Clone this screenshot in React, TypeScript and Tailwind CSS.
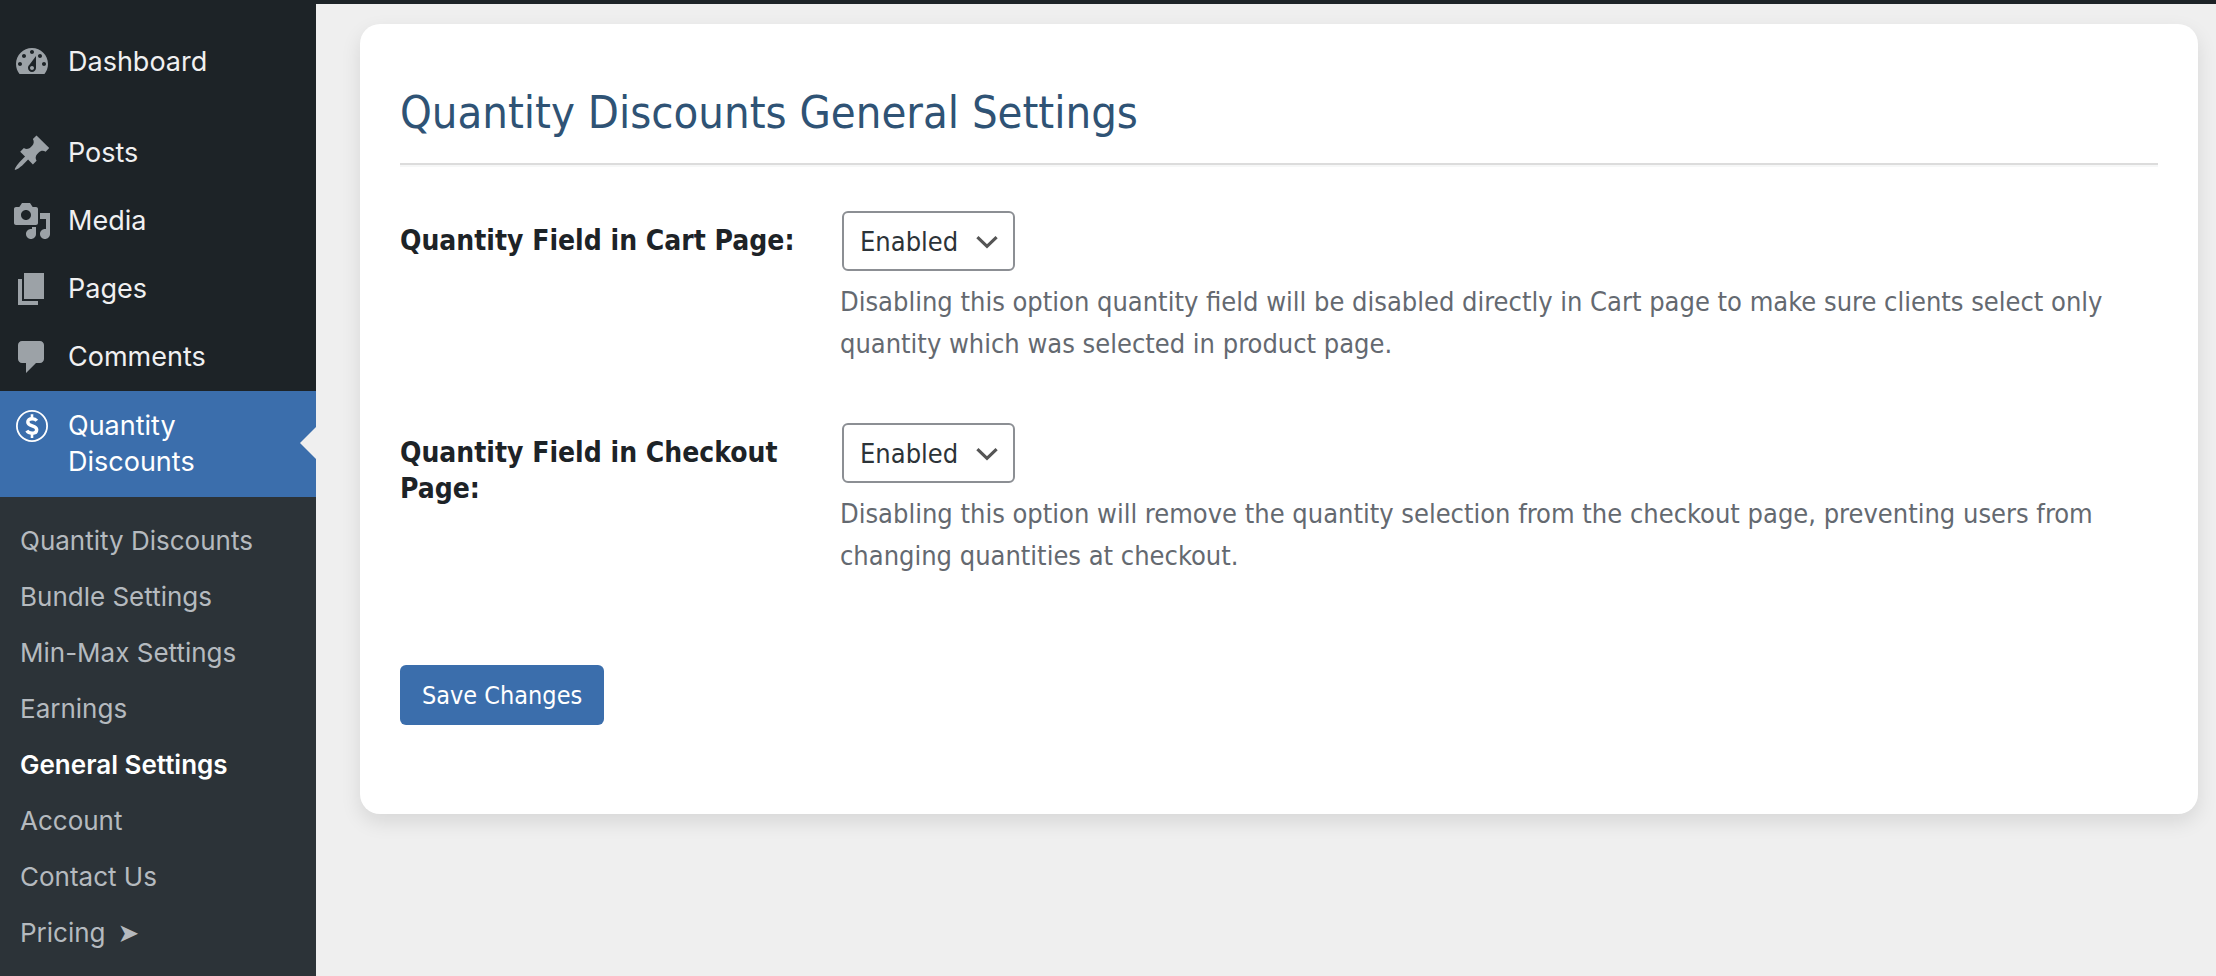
import type { ReactNode } from "react";

const menu = [
  {
    label: "Posts",
    path: "M10.44 3.02l1.82-1.82 6.36 6.35-1.83 1.82c-1.05-.68-2.48-.57-3.41.36l-.75.75c-.92.93-1.04 2.35-.35 3.41l-1.83 1.82-2.41-2.41-2.8 2.79c-.42.42-3.38 2.71-3.8 2.29s1.86-3.39 2.28-3.81l2.79-2.79L4.1 9.36l1.83-1.82c1.05.69 2.48.57 3.4-.36l.75-.75c.93-.92 1.05-2.35.36-3.41z",
  },
  {
    label: "Media",
    path: "M13 11V4c0-.55-.45-1-1-1h-1.67L9 1H5L3.67 3H2c-.55 0-1 .45-1 1v7c0 .55.45 1 1 1h10c.55 0 1-.45 1-1zM7 4.5c1.38 0 2.5 1.12 2.5 2.5S8.38 9.5 7 9.5 4.5 8.38 4.5 7 5.62 4.5 7 4.5zM14 6h5v10.5c0 1.38-1.12 2.5-2.5 2.5S14 17.88 14 16.5s1.12-2.5 2.5-2.5c.17 0 .34.02.5.05V9h-3V6zm-4 8.05V13h2v3.5c0 1.38-1.12 2.5-2.5 2.5S7 17.88 7 16.5 8.12 14 9.5 14c.17 0 .34.02.5.05z",
  },
  { label: "Pages", path: "M6 15V2h10v13H6zm-1 1h8v2H3V5h2v11z" },
  {
    label: "Comments",
    path: "M5 2h9c1.1 0 2 .9 2 2v7c0 1.1-.9 2-2 2h-2l-5 5v-5H5c-1.1 0-2-.9-2-2V4c0-1.1.9-2 2-2z",
  },
];

const dashboardPath =
  "M3.76 16h12.48c1.1-1.37 1.76-3.11 1.76-5 0-4.42-3.58-8-8-8s-8 3.58-8 8c0 1.89.66 3.63 1.76 5zM10 4c.55 0 1 .45 1 1s-.45 1-1 1-1-.45-1-1 .45-1 1-1zM6 6c.55 0 1 .45 1 1s-.45 1-1 1-1-.45-1-1 .45-1 1-1zm8 0c.55 0 1 .45 1 1s-.45 1-1 1-1-.45-1-1 .45-1 1-1zm-5.37 5.55L12 7v6c0 1.1-.9 2-2 2s-2-.9-2-2c0-.57.24-1.08.63-1.45zM4 10c.55 0 1 .45 1 1s-.45 1-1 1-1-.45-1-1 .45-1 1-1zm12 0c.55 0 1 .45 1 1s-.45 1-1 1-1-.45-1-1 .45-1 1-1zm-5 3c0-.55-.45-1-1-1s-1 .45-1 1 .45 1 1 1 1-.45 1-1z";

const submenu = [
  "Quantity Discounts",
  "Bundle Settings",
  "Min-Max Settings",
  "Earnings",
  "General Settings",
  "Account",
  "Contact Us",
];

function MenuItem({ label, path }: { label: string; path: string }) {
  return (
    <li>
      <a href="#" className="flex items-start gap-4 py-4 pl-3 text-[#f0f0f1]">
        <svg viewBox="0 0 20 20" className="-my-0.5 size-10 shrink-0 fill-[#9ca2a7]" aria-hidden="true">
          <path fillRule="evenodd" d={path} />
        </svg>
        {label}
      </a>
    </li>
  );
}

function SettingRow({ id, label, children }: { id: string; label: string; children: ReactNode }) {
  return (
    <div className="grid grid-cols-[400px_minmax(0,1fr)] gap-x-10">
      <label htmlFor={id} className="pt-3 text-[28px] leading-9 font-bold text-[#1d2327]">
        {label}
      </label>
      <div>
        <div className="relative ml-0.5 w-fit">
          <select
            id={id}
            defaultValue="Enabled"
            className="block h-[60px] w-[173px] appearance-none rounded-md border-2 border-[#8c8f94] bg-white pt-0.5 pl-4 text-[27px] leading-9 text-[#2c3338]"
          >
            <option>Enabled</option>
            <option>Disabled</option>
          </select>
          <svg
            viewBox="0 0 32 32"
            className="pointer-events-none absolute top-3.5 right-3 size-8"
            fill="none"
            stroke="#555555"
            strokeWidth="3.2"
            aria-hidden="true"
          >
            <path d="M6.400 12.200l9.600 9.200 9.600-9.200" />
          </svg>
        </div>
        <p className="mt-2.5 text-[27px] leading-[42px] text-[#646970]">{children}</p>
      </div>
    </div>
  );
}

export default function App() {
  return (
    <div className="flex min-h-screen flex-col border-t-4 border-[#1d2327] bg-[#efefef]">
      <div className="flex flex-1">
        <nav
          aria-label="Main menu"
          className="flex w-[316px] shrink-0 flex-col bg-[#1d2327] pt-6 font-['Inter',sans-serif] text-[27px] leading-9"
        >
          <ul>
            <MenuItem label="Dashboard" path={dashboardPath} />
            <li className="h-[23px]" aria-hidden="true" />
            {menu.map((m) => (
              <MenuItem key={m.label} label={m.label} path={m.path} />
            ))}
            <li>
              <a href="#" className="relative flex items-start gap-4 bg-[#3b6eac] pt-[17px] pb-[17px] pl-3 text-white">
                <svg
                  viewBox="0 0 40 40"
                  className="-my-0.5 size-10 shrink-0"
                  fill="none"
                  stroke="currentColor"
                  aria-hidden="true"
                >
                  <circle cx="20" cy="20" r="15.1" strokeWidth="1.8" />
                  <path
                    d="M24.800 14.700c-1-1.300-2.600-2-4.700-2-2.600 0-4.300 1.300-4.300 3.300 0 4.800 8.900 2.900 8.900 7.700 0 2.200-1.900 3.500-4.600 3.500-2.300 0-4.300-.9-5.300-2.500"
                    strokeWidth="3.4"
                  />
                  <path d="M20 8.200v4.600M20 27v5" strokeWidth="2.600" />
                </svg>
                <span>
                  Quantity
                  <br />
                  Discounts
                </span>
                <span
                  className="absolute top-9 right-0 border-y-16 border-r-16 border-y-transparent border-r-[#efefef]"
                  aria-hidden="true"
                />
              </a>
            </li>
          </ul>
          <ul className="flex-1 bg-[#2c3338] pt-4 text-[26px] text-[#b5babf]">
            {submenu.map((s) => (
              <li key={s}>
                <a
                  href="#"
                  className={
                    s === "General Settings"
                      ? "block px-5 py-2.5 font-semibold text-white"
                      : "block px-5 py-2.5"
                  }
                >
                  {s}
                </a>
              </li>
            ))}
            <li>
              <a href="#" className="flex gap-3 px-5 py-2.5">
                Pricing <span className="font-['DejaVu_Sans',sans-serif]">➤</span>
              </a>
            </li>
          </ul>
        </nav>
        <main className="min-w-0 flex-1 pt-5 pr-[18px] pl-11 font-['DejaVu_Sans_Condensed','DejaVu_Sans',sans-serif]">
          <form
            className="rounded-[20px] bg-white px-10 pt-[59px] pb-[89px] shadow-[0_8px_20px_rgba(0,0,0,0.1)]"
            onSubmit={(e) => e.preventDefault()}
          >
            <h1 className="text-[45px] leading-[60px] text-[#2f5375]">Quantity Discounts General Settings</h1>
            <hr className="mt-5 h-1 border-t-2 border-b-2 border-t-[#dcdcdc] border-b-[#f6f7f7]" />
            <div className="mt-11 flex flex-col gap-[58px]">
              <SettingRow id="cart-field" label="Quantity Field in Cart Page:">
                Disabling this option quantity field will be disabled directly in Cart page to make sure clients select
                only quantity which was selected in product page.
              </SettingRow>
              <SettingRow id="checkout-field" label="Quantity Field in Checkout Page:">
                Disabling this option will remove the quantity selection from the checkout page, preventing users from
                changing quantities at checkout.
              </SettingRow>
            </div>
            <button
              type="submit"
              className="mt-[88px] block h-[60px] rounded-md bg-[#3b6eac] px-[22px] pt-0.5 text-[25px] text-white"
            >
              Save Changes
            </button>
          </form>
        </main>
      </div>
    </div>
  );
}
